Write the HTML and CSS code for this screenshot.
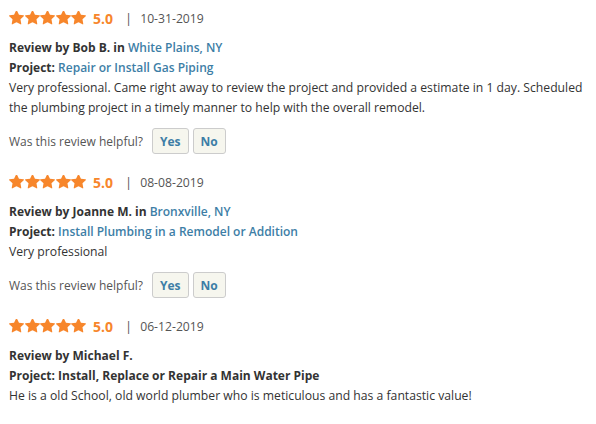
FILE: index.html
```html
<!DOCTYPE html>
<html>
<head>
<meta charset="utf-8">
<link rel="stylesheet" href="styles.css">
</head>
<body>
<svg width="0" height="0" class="defs">
  <defs>
    <symbol id="star" viewBox="64 120 1664 1560">
      <path d="M1728 647q0 22-26 48l-363 354 86 500q1 7 1 20 0 21-10.5 35.5t-30.5 14.5q-19 0-40-12l-449-236-449 236q-22 12-40 12-21 0-31.5-14.5t-10.5-35.5q0-6 2-20l86-500-364-354q-25-27-25-48 0-37 56-46l502-73 225-455q19-41 49-41t49 41l225 455 502 73q56 9 56 46z"/>
    </symbol>
  </defs>
</svg>
<div class="reviews">
  <div class="review">
    <div class="rating">
      <span class="stars">
        <svg class="star"><use href="#star"/></svg><svg class="star"><use href="#star"/></svg><svg class="star"><use href="#star"/></svg><svg class="star"><use href="#star"/></svg><svg class="star"><use href="#star"/></svg>
      </span>
      <span class="score">5.0</span>
      <span class="sep">|</span>
      <span class="date">10-31-2019</span>
    </div>
    <div class="meta">
      <div class="line"><b>Review by Bob B. in </b><a class="link">White Plains, NY</a></div>
      <div class="line"><b>Project: </b><a class="link">Repair or Install Gas Piping</a></div>
    </div>
    <p class="body">Very professional. Came right away to review the project and provided a estimate in 1 day. Scheduled the plumbing project in a timely manner to help with the overall remodel.</p>
    <div class="helpful">
      <span class="q">Was this review helpful?</span>
      <button class="btn">Yes</button>
      <button class="btn">No</button>
    </div>
  </div>
  <div class="review">
    <div class="rating">
      <span class="stars">
        <svg class="star"><use href="#star"/></svg><svg class="star"><use href="#star"/></svg><svg class="star"><use href="#star"/></svg><svg class="star"><use href="#star"/></svg><svg class="star"><use href="#star"/></svg>
      </span>
      <span class="score">5.0</span>
      <span class="sep">|</span>
      <span class="date">08-08-2019</span>
    </div>
    <div class="meta">
      <div class="line"><b>Review by Joanne M. in </b><a class="link">Bronxville, NY</a></div>
      <div class="line"><b>Project: </b><a class="link">Install Plumbing in a Remodel or Addition</a></div>
    </div>
    <p class="body">Very professional</p>
    <div class="helpful">
      <span class="q">Was this review helpful?</span>
      <button class="btn">Yes</button>
      <button class="btn">No</button>
    </div>
  </div>
  <div class="review">
    <div class="rating">
      <span class="stars">
        <svg class="star"><use href="#star"/></svg><svg class="star"><use href="#star"/></svg><svg class="star"><use href="#star"/></svg><svg class="star"><use href="#star"/></svg><svg class="star"><use href="#star"/></svg>
      </span>
      <span class="score">5.0</span>
      <span class="sep">|</span>
      <span class="date">06-12-2019</span>
    </div>
    <div class="meta">
      <div class="line"><b>Review by Michael F.</b></div>
      <div class="line"><b>Project: Install, Replace or Repair a Main Water Pipe</b></div>
    </div>
    <p class="body">He is a old School, old world plumber who is meticulous and has a fantastic value!</p>
  </div>
</div>
</body>
</html>
```

FILE: styles.css
```css
* { box-sizing: border-box; }
body {
  margin: 0;
  background: #fff;
  font-family: "Open Sans", sans-serif;
  font-size: 12px;
  color: #333;
}
.defs {
  position: absolute;
}
.reviews {
  padding: 8px 9px 0 9px;
}
.review {
  margin-bottom: 18px;
}
.rating {
  display: flex;
  align-items: center;
  height: 20px;
}
.stars {
  display: flex;
  gap: 0.5px;
}
.star {
  width: 15px;
  height: 14px;
  fill: #f7862b;
}
.score {
  margin-left: 7px;
  font-weight: 700;
  font-size: 14px;
  color: #f7862b;
}
.sep {
  margin-left: 12px;
  color: #555;
  font-size: 13px;
}
.date {
  margin-left: 8px;
  font-size: 12.2px;
  color: #555;
}
.meta {
  margin-top: 10px;
}
.line {
  line-height: 20px;
}
.line b {
  font-weight: 700;
  color: #333;
}
.link {
  color: #3d7ea6;
  font-weight: 600;
}
.body {
  margin: 0;
  line-height: 20px;
  font-size: 12.2px;
}
.helpful {
  display: flex;
  align-items: center;
  margin-top: 10px;
}
.q {
  color: #555;
}
.btn {
  font-family: "Open Sans", sans-serif;
  font-size: 12px;
  font-weight: 700;
  color: #3d7ea6;
  background: #f6f6ee;
  border: 1px solid #ccc;
  border-radius: 3px;
  height: 26px;
  padding: 0 7px;
  margin-left: 4px;
}
.q + .btn {
  margin-left: 9px;
}
```
